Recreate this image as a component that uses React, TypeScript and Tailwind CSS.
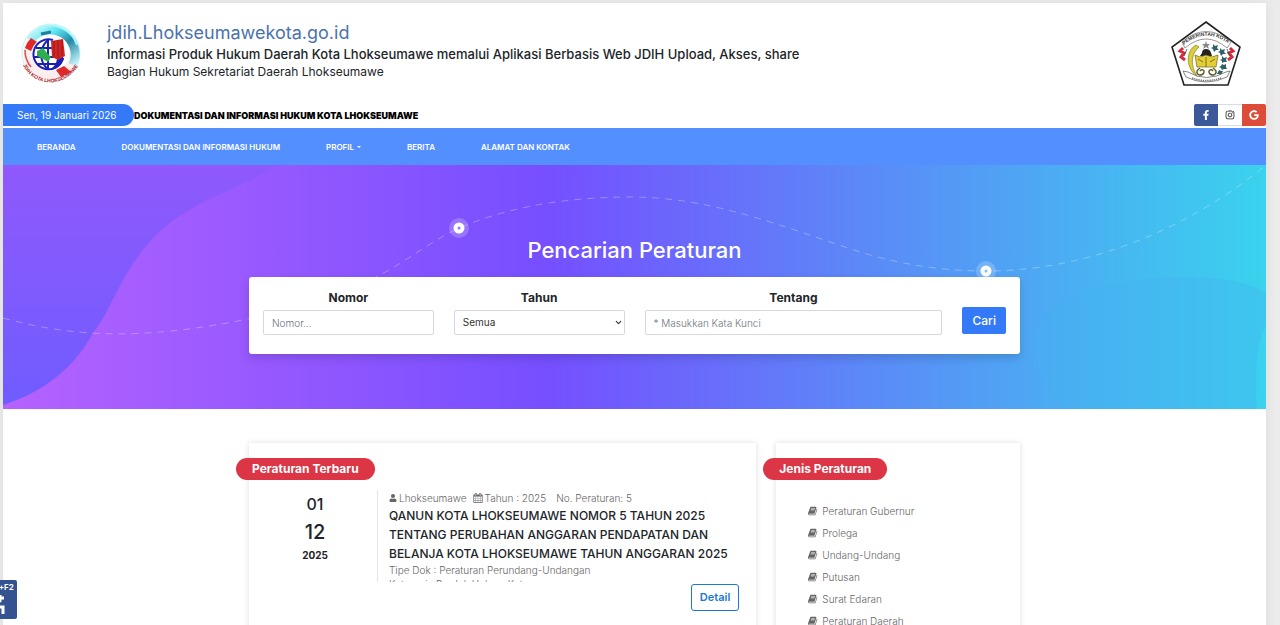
import type {ReactNode} from 'react';
import {ChevronDown} from 'lucide-react';
import {FaFacebookF, FaGoogle, FaInstagram, FaUser} from 'react-icons/fa';

const menus = [
    {label: 'BERANDA'},
    {label: 'DOKUMENTASI DAN INFORMASI HUKUM'},
    {label: 'PROFIL', dropdown: true},
    {label: 'BERITA'},
    {label: 'ALAMAT DAN KONTAK'},
];

const jenisPeraturan = [
    'Peraturan Gubernur',
    'Prolega',
    'Undang-Undang',
    'Putusan',
    'Surat Edaran',
    'Peraturan Daerah',
];

function IconBook() {
    return (
        <svg viewBox="0 0 1792 1792" className="size-[10px] shrink-0" fill="currentColor" aria-hidden="true">
            <path d="M1639 478q40 57 18 129l-275 906q-19 64-76.5 107.5t-122.5 43.5h-923q-77 0-148.5-53.5t-99.5-131.5q-24-67-2-127 0-4 3-27t4-37q1-8-3-21.5t-3-19.5q2-11 8-21t16.5-23.5 16.5-23.5q23-38 45-91.5t30-91.5q3-10 .5-30t-.5-28q3-11 17-28t17-23q21-36 42-92t25-90q1-9-2.5-32t.5-28q4-13 22-30.5t22-22.5q19-26 42.5-84.5t27.5-96.5q1-8-3-25.5t-2-26.5q2-8 9-18t18-23 17-21q8-12 16.5-30.5t15-35 16-36 19.5-32 26.5-23.5 36-11.5 47.5 5.5l-1 3q38-9 51-9h761q74 0 114 56t18 130l-274 906q-36 119-71.5 153.5t-128.5 34.5h-869q-27 0-38 15-11 16-1 43 24 70 144 70h923q29 0 56-15.5t35-41.5l300-987q7-22 5-57 38 15 59 43zm-1064 2q-4 13 2 22.5t20 9.5h608q13 0 25.5-9.5t16.5-22.5l21-64q4-13-2-22.5t-20-9.5h-608q-13 0-25.5 9.5t-16.5 22.5zm-83 256q-4 13 2 22.5t20 9.5h608q13 0 25.5-9.5t16.5-22.5l21-64q4-13-2-22.5t-20-9.5h-608q-13 0-25.5 9.5t-16.5 22.5z"/>
        </svg>
    );
}

function IconCalendar() {
    return (
        <svg viewBox="0 0 1792 1792" className="size-[10px] shrink-0" fill="currentColor" aria-hidden="true">
            <path d="M192 1664h288v-288h-288v288zm352 0h320v-288h-320v288zm-352-352h288v-320h-288v320zm352 0h320v-320h-320v320zm-352-384h288v-288h-288v288zm736 736h320v-288h-320v288zm-384-736h320v-288h-320v288zm768 736h288v-288h-288v288zm-384-352h320v-320h-320v320zm-352-864v-288q0-13-9.5-22.5t-22.5-9.5h-64q-13 0-22.5 9.5t-9.5 22.5v288q0 13 9.5 22.5t22.5 9.5h64q13 0 22.5-9.5t9.5-22.5zm736 864h288v-320h-288v320zm-384-384h320v-288h-320v288zm384 0h288v-288h-288v288zm32-480v-288q0-13-9.5-22.5t-22.5-9.5h-64q-13 0-22.5 9.5t-9.5 22.5v288q0 13 9.5 22.5t22.5 9.5h64q13 0 22.5-9.5t9.5-22.5zm384-64v1280q0 52-38 90t-90 38h-1408q-52 0-90-38t-38-90v-1280q0-52 38-90t90-38h128v-96q0-66 47-113t113-47h64q66 0 113 47t47 113v96h384v-96q0-66 47-113t113-47h64q66 0 113 47t47 113v96h128q52 0 90 38t38 90z"/>
        </svg>
    );
}

function IconAccess() {
    return (
        <svg viewBox="0 0 24 24" className="size-6" fill="none" stroke="currentColor" strokeWidth="3" aria-hidden="true">
            <circle cx="8" cy="4" r="2" fill="currentColor" stroke="none"/>
            <path d="M3 11C8 12 13 11 16 9V3M14 6H20"/>
            <path d="M5 21V15H19V22M12 15V21"/>
        </svg>
    );
}

function LogoJdih() {
    return (
        <svg viewBox="0 0 64 64" className="size-16 shrink-0" role="img" aria-label="JDIH Kota Lhokseumawe">
            <defs>
                <linearGradient id="ring" x1="0" y1="0" x2="1" y2="1">
                    <stop offset="0" stopColor="#d4fbff"/>
                    <stop offset=".3" stopColor="#5fe6f0"/>
                    <stop offset=".6" stopColor="#2388a8"/>
                    <stop offset="1" stopColor="#c9f6fb"/>
                </linearGradient>
                <path id="ringText" d="M4 45C14 67 46 70 61 43"/>
            </defs>
            <circle cx="32" cy="33" r="29" fill="#fff" stroke="#cdeff3"/>
            <circle cx="32" cy="33" r="23" fill="none" stroke="#fbeeee" strokeWidth="9"/>
            <path d="M11 20A25 25 0 0 1 54 45" fill="none" stroke="url(#ring)" strokeWidth="9"/>
            <path d="M20 8A28 28 0 0 1 58 25" fill="none" stroke="#a5f7fc" strokeWidth="2"/>
            <path d="M22 14L32 12" stroke="#1d7f9c" strokeWidth="3"/>
            <path d="M6 28A27 27 0 0 1 12 18L18 22A20 20 0 0 0 12 31Z" fill="#e02a2a"/>
            <path d="M6 30A26 26 0 0 0 12 47" fill="none" stroke="#e54848" strokeWidth="1.5"/>
            <path d="M37 50L42 57L52 52L45 46Z" fill="#e02a2a"/>
            <circle cx="30" cy="34" r="17" fill="#fff"/>
            <g fill="none" stroke="#1c1fb5" strokeWidth="2">
                <path d="M34 20A15 15 0 1 0 44 38"/>
                <path d="M29 20C20 28 20 42 29 49M29 20V49M17 28H34M15 37H44M19 44H40"/>
            </g>
            <path d="M18 31L24 28L28 33L32 37L29 42L24 39L18 36Z" fill="#2fae4e"/>
            <path d="M38 38L45 38C44 44 38 50 32 49C36 46 38 42 38 38Z" fill="#1c1fb5"/>
            <path d="M32 21L44 19L46 36L39 40L33 37Z" fill="#cf2626"/>
            <path d="M35 21V37M39 20V38M43 20V36" stroke="#8e1212" strokeWidth=".7"/>
            <text fontSize="5" fontWeight="900" fontFamily="Liberation Sans, sans-serif" fill="#b5161d">
                <textPath href="#ringText">JDIH KOTA LHOKSEUMAWE</textPath>
            </text>
        </svg>
    );
}

function LogoKota() {
    return (
        <svg viewBox="0 0 72 68" className="h-[68px] w-[72px] shrink-0" role="img" aria-label="Pemerintah Kota Lhokseumawe">
            <defs>
                <path id="bannerText" d="M14 25Q36 6 62 26"/>
            </defs>
            <path d="M36 2L70 27L58 65H14L2 27Z" fill="#fff" stroke="#222" strokeWidth="1.6"/>
            <path d="M12 22Q36 1 61 22L57 28Q36 10 15 28Z" fill="#fff" stroke="#555" strokeWidth=".6"/>
            <text fontSize="5" fontWeight="700" fontFamily="Liberation Sans, sans-serif" fill="#333">
                <textPath href="#bannerText">PEMERINTAH KOTA</textPath>
            </text>
            <path d="M13 28L10 31L14 33L11 37L15 40M60 28L63 31L59 33L62 37L58 40" fill="none" stroke="#d22b3c" strokeWidth="3"/>
            <path d="M17 29L14 36M57 29L60 36" stroke="#444" strokeWidth=".8"/>
            <path d="M26 25C15 31 16 49 27 56C21 46 20 35 29 27Z" fill="#d8cf3c" stroke="#8a8420" strokeWidth=".7"/>
            <g fill="#2d6268">
                <path d="M43 24L45 26L48 25L47 28L49 30L46 30L44 32L43 29L41 28L43 27Z"/>
                <path d="M50 28L52 30L55 29L54 32L56 34L53 34L51 36L50 33L48 32L50 31Z"/>
                <path d="M52 36L54 38L57 37L56 40L57 42L54 42L52 43L52 41L50 40L52 39Z"/>
                <path d="M52 44L54 45L56 44L56 47L57 49L54 49L52 50L51 48L49 47L51 46Z"/>
                <path d="M49 50L51 51L53 51L52 53L51 55L49 54L47 54L48 52Z"/>
            </g>
            <path d="M36 21L37 24H40L38 26L39 29L36 27L33 29L34 26L32 24H35Z" fill="#888"/>
            <path d="M32 33Q32 29 36 29Q40 29 41 33L42 36H30Z" fill="#222"/>
            <path d="M25 35L30 37L36 35L42 37L48 35L46 47H27Z" fill="#e3cf35" stroke="#6c6420" strokeWidth=".7"/>
            <path d="M28 39L33 42M45 39L40 42M36 37V47" stroke="#5f5a20" strokeWidth=".8"/>
            <path d="M30 48C24 52 28 57 33 54C36 51 32 48 30 51M43 48C49 52 45 57 40 54C37 51 41 48 43 51" fill="none" stroke="#605a25" strokeWidth="1.5"/>
            <path d="M13 51L18 52Q36 63 56 52L60 51L57 57Q36 67 16 57Z" fill="#fff" stroke="#666" strokeWidth=".8"/>
            <path d="M22 58Q36 63 51 58" fill="none" stroke="#777" strokeWidth="1.4" strokeDasharray="1.4 .8"/>
        </svg>
    );
}

function Header() {
    return (
        <header>
            <div className="flex items-start justify-between pt-[17px] pr-6 pl-4">
                <div className="flex gap-6">
                    <LogoJdih/>
                    <div className="pt-[2px]">
                        <h1 className="text-[18px] leading-[22px] text-[#4a72ad]">jdih.Lhokseumawekota.go.id</h1>
                        <h2 className="text-[13px] leading-5 font-medium">
                            Informasi Produk Hukum Daerah Kota Lhokseumawe memalui Aplikasi Berbasis Web JDIH Upload, Akses, share
                        </h2>
                        <h3 className="text-[12px] leading-4">Bagian Hukum Sekretariat Daerah Lhokseumawe</h3>
                    </div>
                </div>
                <LogoKota/>
            </div>
            <div className="mt-4 flex h-[22px] items-center justify-between">
                <div className="flex h-full items-center">
                    <span className="flex h-full w-[131px] items-center rounded-r-full bg-[#3379f8] pl-[14px] text-[10px] text-white">
                        Sen, 19 Januari 2026
                    </span>
                    <span className="pt-[2px] text-[9px] font-black text-black">
                        DOKUMENTASI DAN INFORMASI HUKUM KOTA LHOKSEUMAWE
                    </span>
                </div>
                <div className="flex h-full overflow-hidden rounded-[2px] text-[10px]">
                    <a href="#" aria-label="Facebook" className="flex w-6 items-center justify-center bg-[#3b5998] text-white">
                        <FaFacebookF/>
                    </a>
                    <a href="#" aria-label="Instagram" className="flex w-6 items-center justify-center border-y border-[#d9dde3] bg-white text-[#222]">
                        <FaInstagram/>
                    </a>
                    <a href="#" aria-label="Google" className="flex w-6 items-center justify-center bg-[#dd4b39] text-white">
                        <FaGoogle/>
                    </a>
                </div>
            </div>
            <nav className="mt-[2px] flex h-[37px] items-center bg-[#548fff] pl-[11px]">
                {menus.map((menu) => (
                    <a key={menu.label} href="#" className="flex items-center gap-[3px] px-[23px] text-[8px] font-semibold text-white">
                        {menu.label}
                        {menu.dropdown && (
                            <span className="border-x-2 border-t-2 border-x-transparent border-t-white"/>
                        )}
                    </a>
                ))}
            </nav>
        </header>
    );
}

function HeroBackground() {
    return (
        <svg viewBox="0 0 1263 244" preserveAspectRatio="none" className="absolute inset-0 size-full" aria-hidden="true">
            <defs>
                <linearGradient id="wave" x1="0" y1="0" x2="0" y2="1">
                    <stop offset="0" stopColor="#8f59fc"/>
                    <stop offset="1" stopColor="#705cff"/>
                </linearGradient>
            </defs>
            <path d="M0 0H274C240 22 204 32 184 47C158 61 142 80 124 108C110 132 104 150 90 168C76 194 50 224 0 240Z" fill="url(#wave)"/>
            <path d="M1060 244C1020 190 1020 150 1080 128C1130 108 1230 105 1263 128V160C1252 180 1252 220 1254 244Z" fill="#46b3f2" fillOpacity=".35"/>
            <path
                d="M0 153C80 175 150 173 245 154C300 140 350 125 377 110C405 95 430 75 456 63C510 40 570 32 627 32C710 32 780 62 857 87C900 100 940 106 983 106C1090 106 1190 60 1263 0"
                fill="none"
                stroke="#fff"
                strokeOpacity=".3"
                strokeDasharray="7 6"
            />
            <circle cx="456" cy="63" r="10" fill="#fff" fillOpacity=".2"/>
            <circle cx="456" cy="63" r="3.5" fill="none" stroke="#fff" strokeWidth="4"/>
            <circle cx="983" cy="106" r="10" fill="#fff" fillOpacity=".2"/>
            <circle cx="983" cy="106" r="3.5" fill="none" stroke="#fff" strokeWidth="4"/>
        </svg>
    );
}

function Pencarian() {
    const label = 'mb-1 block text-center text-[12px] leading-4 font-bold';
    const control = 'block h-[25px] w-full rounded-[2px] border border-[#d5d9dd] bg-white px-2 text-[10px] outline-none';

    return (
        <section className="relative h-[244px] bg-linear-to-r/srgb from-[#b562ff] via-[#764fff] via-43% to-[#3ad2ee] px-5">
            <HeroBackground/>
            <div className="relative mx-auto max-w-[771px] pt-[70px]">
                <h2 className="text-center text-[22px] leading-[30px] font-medium text-white">Pencarian Peraturan</h2>
                <form className="mt-3 grid h-[77px] grid-cols-12 gap-5 rounded-[3px] bg-white px-[14px] pt-[13px] shadow-[0_4px_10px_rgba(0,0,0,0.15)]">
                    <div className="col-span-3">
                        <label htmlFor="nomor" className={label}>Nomor</label>
                        <input id="nomor" placeholder="Nomor..." className={`${control} font-light placeholder:text-[#6c757d]`}/>
                    </div>
                    <div className="col-span-3">
                        <label htmlFor="tahun" className={label}>Tahun</label>
                        <div className="relative">
                            <select id="tahun" className={`${control} appearance-none text-[#333]`}>
                                <option>Semua</option>
                            </select>
                            <ChevronDown className="pointer-events-none absolute top-2 right-[2px] size-[9px] text-[#333]" strokeWidth={3}/>
                        </div>
                    </div>
                    <div className="col-span-5">
                        <label htmlFor="tentang" className={label}>Tentang</label>
                        <input id="tentang" placeholder="* Masukkan Kata Kunci" className={`${control} font-light placeholder:text-[#6c757d]`}/>
                    </div>
                    <button type="button" className="mt-[17px] h-[27px] rounded-[2px] bg-[#3379f8] text-[12px] font-medium text-white">
                        Cari
                    </button>
                </form>
            </div>
        </section>
    );
}

function Card({title, className, children}: {title: string; className: string; children: ReactNode}) {
    return (
        <section className={`${className} bg-white pt-[15px] pb-10 shadow-[0_0_6px_rgba(0,0,0,0.13)]`}>
            <h2 className="-ml-[13px] w-fit rounded-full bg-[#dc3545] px-4 text-[12px] leading-[22px] font-bold text-white">
                {title}
            </h2>
            {children}
        </section>
    );
}

function PeraturanTerbaru() {
    return (
        <Card title="Peraturan Terbaru" className="col-span-8">
            <article className="mt-[10px] flex h-[92px] overflow-hidden">
                <div className="w-[129px] shrink-0 border-r border-[#e4e7ea] pl-1 text-center">
                    <p className="text-[16px] leading-7 font-medium">01</p>
                    <p className="text-[20px] leading-7 font-medium">12</p>
                    <p className="text-[10px] leading-[18px] font-bold">2025</p>
                </div>
                <div className="pl-[11px] text-[10px] font-light text-[#666]">
                    <p className="flex items-center gap-[2px] leading-4">
                        <FaUser className="size-2"/>
                        <span>Lhokseumawe</span>
                        <span className="ml-1"><IconCalendar/></span>
                        <span>Tahun : 2025</span>
                        <span className="ml-2">No. Peraturan: 5</span>
                    </p>
                    <h3 className="text-[12px] leading-[19px] font-medium text-[#212529]">
                        QANUN KOTA LHOKSEUMAWE NOMOR 5 TAHUN 2025 TENTANG PERUBAHAN ANGGARAN PENDAPATAN DAN BELANJA KOTA LHOKSEUMAWE TAHUN ANGGARAN 2025
                    </h3>
                    <p className="leading-[14px]">Tipe Dok : Peraturan Perundang-Undangan</p>
                    <p className="leading-[14px]">Kategori : Produk Hukum Kota</p>
                </div>
            </article>
            <div className="mt-[2px] flex justify-end pr-[17px]">
                <button type="button" className="h-[27px] rounded-[3px] border border-[#1c78d0] px-2 text-[11px] font-semibold text-[#1c78d0]">
                    Detail
                </button>
            </div>
        </Card>
    );
}

function JenisPeraturan() {
    return (
        <Card title="Jenis Peraturan" className="col-span-4">
            <ul className="mt-5 pl-8 text-[10px] leading-[22px] font-light text-[#666]">
                {jenisPeraturan.map((jenis) => (
                    <li key={jenis}>
                        <a href="#" className="flex items-center gap-1">
                            <IconBook/>
                            {jenis}
                        </a>
                    </li>
                ))}
            </ul>
        </Card>
    );
}

function App() {
    return (
        <div className="h-screen overflow-hidden bg-[#ebebeb] pt-[3px] pr-[14px] pl-[3px] font-['Inter',sans-serif] text-[#212529]">
            <div className="min-h-full bg-white shadow-[0_0_12px_rgba(0,0,0,0.06)]">
                <Header/>
                <Pencarian/>
                <main className="px-5 pt-[34px]">
                    <div className="mx-auto grid max-w-[771px] grid-cols-12 gap-5">
                        <PeraturanTerbaru/>
                        <JenisPeraturan/>
                    </div>
                </main>
            </div>
            <button type="button" className="fixed bottom-[6px] -left-[25px] flex h-[39px] w-[42px] flex-col items-center rounded-[2px] bg-[#34528f] pt-[2px] text-[8px] leading-[10px] font-bold text-white">
                CTRL+F2
                <IconAccess/>
            </button>
        </div>
    );
}

export default App
